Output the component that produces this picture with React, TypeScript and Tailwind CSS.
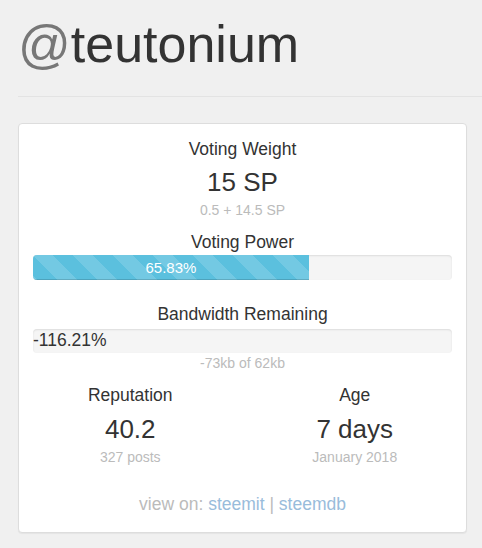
import React from 'react';

const font = { fontFamily: '"Liberation Sans", Arial, Helvetica, sans-serif' };

function Stat({ label, value, sub }: { label: string; value: string; sub: string }) {
  return (
    <div className="text-center">
      <div className="text-[17.5px] leading-[24px] text-[#333]">{label}</div>
      <div className="text-[26px] leading-[44px] text-[#333]">{value}</div>
      <div className="text-[14px] leading-[13px] text-[#bbb]">{sub}</div>
    </div>
  );
}

export default function App() {
  const votingPower = 65.83;

  return (
    <div className="min-h-screen bg-[#f0f0f0] pl-[18px] pt-[14px] pb-[20px]" style={font}>
      <h1 className="text-[52px] leading-[60px] font-normal">
        <span className="text-[#777]">@</span>
        <span className="text-[#333]">teutonium</span>
      </h1>
      <hr className="mt-[22px] border-0 border-t border-[#e3e3e3]" />

      <div className="mt-[26px] mr-[15px] rounded-[4px] border border-[#dddddd] bg-white px-[14px] pt-[13px] pb-[16px] shadow-[0_1px_1px_rgba(0,0,0,0.05)]">
        <div className="text-center">
          <div className="text-[17.5px] leading-[24px] text-[#333]">Voting Weight</div>
          <div className="text-[26px] leading-[42px] text-[#333]">15 SP</div>
          <div className="text-[14px] leading-[14px] text-[#bbb]">0.5 + 14.5 SP</div>
        </div>

        <div className="mt-[13px] text-center text-[17.5px] leading-[24px] text-[#333]">Voting Power</div>
        <div className="mt-[1px] h-[25px] overflow-hidden rounded-[4px] bg-[#f5f5f5] shadow-[inset_0_1px_2px_rgba(0,0,0,0.1)]">
          <div
            className="h-full bg-[#5bc0de] bg-[linear-gradient(45deg,rgba(255,255,255,.15)_25%,transparent_25%,transparent_50%,rgba(255,255,255,.15)_50%,rgba(255,255,255,.15)_75%,transparent_75%,transparent)] bg-[length:40px_40px] text-center text-[15px] leading-[25px] text-white shadow-[inset_0_-1px_0_rgba(0,0,0,0.15)]"
            style={{ width: `${votingPower}%` }}
          >
            65.83%
          </div>
        </div>

        <div className="mt-[22px] text-center text-[17.5px] leading-[24px] text-[#333]">Bandwidth Remaining</div>
        <div className="mt-[3px] h-[24px] rounded-[4px] bg-[#f5f5f5] shadow-[inset_0_1px_2px_rgba(0,0,0,0.1)]">
          <div className="text-[17.5px] leading-[23px] text-[#333]">-116.21%</div>
        </div>
        <div className="text-center text-[14px] leading-[20px] text-[#bbb]">-73kb of 62kb</div>

        <div className="-mx-[15px] mt-[10px] grid grid-cols-2">
          <Stat label="Reputation" value="40.2" sub="327 posts" />
          <Stat label="Age" value="7 days" sub="January 2018" />
        </div>

        <div className="mt-[28px] text-center text-[17.5px] leading-[24px] text-[#bbb]">
          view on: <a className="text-[#99bcdb]">steemit</a> | <a className="text-[#99bcdb]">steemdb</a>
        </div>
      </div>
    </div>
  );
}
